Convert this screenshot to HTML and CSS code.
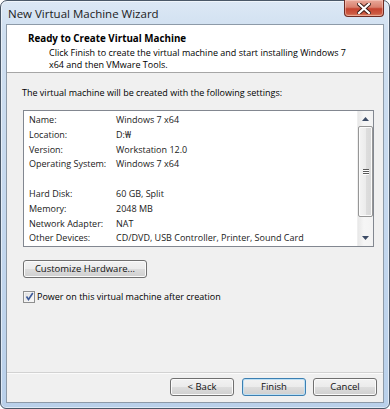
FILE: index.html
```html
<!DOCTYPE html>
<html>
<head>
<meta charset="utf-8">
<link rel="stylesheet" href="styles.css">
</head>
<body>
<div class="window">
  <div class="titlebar">
    <span class="title">New Virtual Machine Wizard</span>
    <div class="close">
      <svg width="14" height="11" viewBox="0 0 14 11"><path d="M2 1 L12 10 M12 1 L2 10" stroke="#3a1a14" stroke-width="4" stroke-linecap="square"/><path d="M2 1 L12 10 M12 1 L2 10" stroke="#ffffff" stroke-width="2.2" stroke-linecap="square"/></svg>
    </div>
  </div>
  <div class="client">
    <div class="header">
      <div class="h-title">Ready to Create Virtual Machine</div>
      <div class="h-sub">Click Finish to create the virtual machine and start installing Windows 7</div>
      <div class="h-sub">x64 and then VMware Tools.</div>
    </div>
    <div class="body">
      <p class="intro">The virtual machine will be created with the following settings:</p>
      <div class="listbox">
        <div class="rows">
          <div class="row"><span class="k">Name:</span><span class="v">Windows 7 x64</span></div>
          <div class="row"><span class="k">Location:</span><span class="v">D:₩</span></div>
          <div class="row"><span class="k">Version:</span><span class="v">Workstation 12.0</span></div>
          <div class="row"><span class="k">Operating System:</span><span class="v">Windows 7 x64</span></div>
          <div class="row"></div>
          <div class="row"><span class="k">Hard Disk:</span><span class="v">60 GB, Split</span></div>
          <div class="row"><span class="k">Memory:</span><span class="v">2048 MB</span></div>
          <div class="row"><span class="k">Network Adapter:</span><span class="v">NAT</span></div>
          <div class="row"><span class="k">Other Devices:</span><span class="v">CD/DVD, USB Controller, Printer, Sound Card</span></div>
        </div>
        <div class="scrollbar">
          <div class="arrow"><svg width="7" height="4" viewBox="0 0 7 4"><path d="M0 4 L3.5 0 L7 4 Z" fill="#3d4c66"/></svg></div>
          <div class="track">
            <div class="thumb">
              <div class="grip"><i></i><i></i><i></i></div>
            </div>
          </div>
          <div class="arrow"><svg width="7" height="4" viewBox="0 0 7 4"><path d="M0 0 L3.5 4 L7 0 Z" fill="#3d4c66"/></svg></div>
        </div>
      </div>
      <div class="btn customize">Customize Hardware...</div>
      <div class="check">
        <span class="box"><svg width="9" height="9" viewBox="0 0 9 9"><path d="M1.5 4.5 L3.5 7.5 L7.8 1" fill="none" stroke="#3c5a9a" stroke-width="1.6"/></svg></span>
        <span>Power on this virtual machine after creation</span>
      </div>
    </div>
    <div class="footer">
      <div class="btn">&lt; Back</div>
      <div class="btn default">Finish</div>
      <div class="btn">Cancel</div>
    </div>
  </div>
</div>
</body>
</html>
```
FILE: styles.css
```css
* { box-sizing: border-box; }
html, body { margin: 0; padding: 0; background: #ffffff; }
body { width: 390px; height: 409px; overflow: hidden; font-family: "Open Sans", "Noto Sans", sans-serif; color: #000; }

.window {
  width: 390px;
  height: 409px;
  border: 1px solid #4a5868;
  border-radius: 7px 7px 6px 6px;
  background: linear-gradient(180deg, #dce8f5 0%, #cfdff0 8%, #c3d7ee 60%, #b9d0ea 100%);
  padding: 0 5px 5px 5px;
  display: flex;
  flex-direction: column;
  box-shadow: inset 0 0 0 1px rgba(255,255,255,0.55);
}

.titlebar {
  height: 23px;
  display: flex;
  justify-content: space-between;
  align-items: flex-start;
  padding-left: 2px;
}
.title {
  font-size: 11.5px;
  line-height: 23px;
  color: #1b1b1b;
  padding-top: 1px;
}
.close {
  width: 40px;
  height: 17px;
  margin-top: -1px;
  border: 1px solid #6e2a22;
  border-top: none;
  border-radius: 0 0 4px 4px;
  background: linear-gradient(180deg, #e9a99a 0%, #d9806e 45%, #c5432f 55%, #cc5a42 85%, #dc8a6c 100%);
  display: flex;
  align-items: center;
  justify-content: center;
  box-shadow: inset 0 0 0 1px rgba(255,220,210,0.45);
}

.client {
  flex: 1;
  border: 1px solid #8d9aa8;
  background: #f0f0f0;
  display: flex;
  flex-direction: column;
}

.header {
  background: #ffffff;
  height: 48px;
  border-bottom: 1px solid #a6a6a6;
  padding: 8px 0 0 21px;
}
.h-title {
  font-weight: bold;
  font-size: 9.8px;
  line-height: 12px;
  height: 13.5px;
}
.h-sub {
  padding-left: 21px;
  font-size: 9px;
  line-height: 12.4px;
  height: 12.4px;
}

.body {
  padding: 13px 9px 0 15px;
  flex: 1;
  font-size: 9px;
}
.intro {
  margin: 0 0 11px 0;
  line-height: 13px;
}

.listbox {
  margin-left: 1px;
  height: 137px;
  border: 1px solid #828790;
  background: #ffffff;
  display: flex;
}
.rows {
  flex: 1;
  padding: 2px 0 0 5px;
}
.row {
  height: 14.8px;
  line-height: 14.8px;
  display: flex;
  color: #1a1a1a;
}
.k { width: 87px; flex: none; }

.scrollbar {
  width: 16px;
  display: flex;
  flex-direction: column;
  background: linear-gradient(90deg, #e8e8e8, #f6f6f6 40%, #f3f3f3);
  border-left: 1px solid #efefef;
}
.arrow {
  height: 16px;
  display: flex;
  align-items: center;
  justify-content: center;
}
.track { flex: 1; }
.thumb {
  height: 91px;
  margin-top: -1px;
  border: 1px solid #969696;
  border-radius: 2px;
  background: linear-gradient(90deg, #f4f4f4 0%, #ececec 50%, #dedede 51%, #d8d8d8 100%);
  box-shadow: inset 0 0 0 1px #fbfbfb;
  display: flex;
  align-items: center;
  justify-content: center;
}
.grip { display: flex; flex-direction: column; gap: 1px; }
.grip i {
  display: block;
  width: 6px;
  height: 1px;
  background: #5a5a5a;
  box-shadow: 0 1px 0 #fff;
}

.btn {
  height: 18px;
  width: 64px;
  border: 1px solid #707070;
  border-radius: 3px;
  background: linear-gradient(180deg, #f2f2f2 0%, #ebebeb 50%, #dddddd 51%, #cfcfcf 100%);
  box-shadow: inset 0 0 0 1px #fbfbfb;
  font-size: 9.5px;
  line-height: 16px;
  text-align: center;
  color: #111;
}
.customize {
  width: 124px;
  margin: 13px 0 0 1px;
}
.check {
  margin: 12px 0 0 1px;
  display: flex;
  align-items: center;
  gap: 2px;
  line-height: 13px;
}
.box {
  width: 12px;
  height: 12px;
  border: 1px solid #8e8f8f;
  background: linear-gradient(135deg, #dcdcdc, #fbfbfb);
  box-shadow: inset 0 0 0 1px #f4f4f4;
  display: flex;
  align-items: center;
  justify-content: center;
}

.footer {
  height: 30px;
  border-top: 1px solid #d2d2d2;
  box-shadow: inset 0 1px 0 #fbfbfb;
  display: flex;
  justify-content: flex-end;
  gap: 7px;
  padding: 5px 6px 0 0;
}
.footer .btn:first-child { margin-right: 1px; }
.btn.default {
  border-color: #3c7fb1;
  box-shadow: inset 0 0 0 1px #bde0f5;
}
```
